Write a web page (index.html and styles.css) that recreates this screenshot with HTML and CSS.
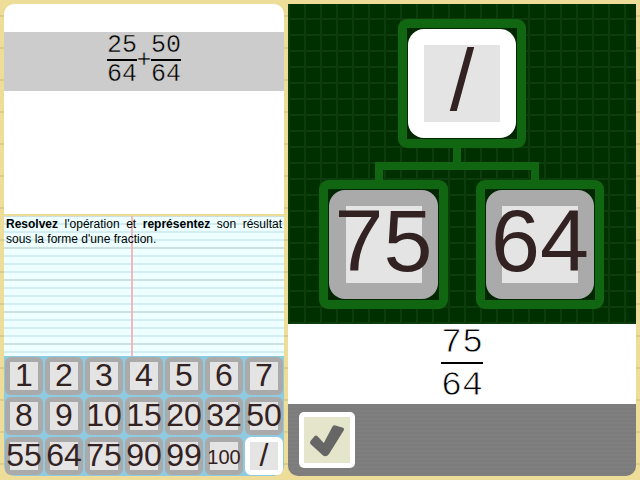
FILE: index.html
```
<!DOCTYPE html>
<html lang="fr">
<head>
<meta charset="utf-8">
<title>Fractions</title>
<link rel="stylesheet" href="styles.css">
</head>
<body>
<div class="app">
  <section class="left">
    <div class="problem">
      <div class="expression">
        <span class="fraction"><span class="num">25</span><span class="den">64</span></span><span class="plus">+</span><span class="fraction"><span class="num">50</span><span class="den">64</span></span>
      </div>
    </div>
    <div class="notes"><p><b>Resolvez</b> l'opération et <b>représentez</b> son résultat sous la forme d'une fraction.</p></div>
    <div class="keys">
      <div class="key">1</div><div class="key">2</div><div class="key">3</div><div class="key">4</div><div class="key">5</div><div class="key">6</div><div class="key">7</div>
      <div class="key">8</div><div class="key">9</div><div class="key">10</div><div class="key">15</div><div class="key">20</div><div class="key">32</div><div class="key">50</div>
      <div class="key">55</div><div class="key">64</div><div class="key">75</div><div class="key">90</div><div class="key">99</div><div class="key small">100</div><div class="key op">/</div>
    </div>
  </section>
  <section class="right">
    <div class="board">
      <div class="slot"><div class="tile white">/</div></div>
      <div class="stem"></div>
      <div class="branch"></div>
      <div class="children">
        <div class="slot wide"><div class="tile">75</div></div>
        <div class="slot"><div class="tile">64</div></div>
      </div>
    </div>
    <div class="answer"><span class="fraction large"><span class="num">75</span><span class="den">64</span></span></div>
    <div class="toolbar">
      <button class="check" aria-label="Valider">
        <svg width="56" height="56" viewBox="0 0 56 56"><path d="M11.500 29L15.500 24.200Q17 22.700 18.500 24.200L24.800 31L33.500 14.500Q34.500 13 36.500 13.400L44 15.700Q45.800 16.500 44.800 18.200L30 42Q27 45.800 23.500 43L11.500 32Q10.500 30.500 11.500 29Z" fill="#666"/></svg>
      </button>
    </div>
  </section>
</div>
</body>
</html>
```
FILE: styles.css
```
* { box-sizing: border-box; }
body {
  margin: 0;
  width: 640px;
  height: 480px;
  overflow: hidden;
  font-family: "Liberation Sans", Arial, sans-serif;
  background: repeating-linear-gradient(#eedd99 0 15px, #dccb8b 15px 17px, #eedd99 17px 32px);
}
.app {
  display: grid;
  grid-template-columns: 280px 348px;
  gap: 4px;
  height: 480px;
  padding: 4px;
}
.left { display: flex; flex-direction: column; height: 472px; }
.problem {
  height: 210px;
  padding-top: 28px;
  background: #fff;
  border-radius: 10px 10px 0 0;
}
.expression {
  display: flex;
  justify-content: center;
  height: 59px;
  background: #ccc;
  color: #000;
  font: 25px/30px "Liberation Mono", monospace;
  -webkit-text-stroke: .45px #ccc;
}
.fraction {
  display: flex;
  flex-direction: column;
  width: 30px;
  text-align: center;
}
.num { height: 29px; line-height: 27px; border-bottom: 2px solid #000; }
.den { height: 29px; line-height: 28px; }
.plus { width: 14px; line-height: 57px; text-align: center; text-indent: -.5px; }
.notes {
  height: 140px;
  margin-top: 2px;
  padding: 1px 2px 0;
  background:
    linear-gradient(90deg, transparent 127px, #f4b8bc 127px 129px, transparent 129px),
    linear-gradient(#cde0e0 2px, transparent 2px) 0 -1px / 100% 32px,
    linear-gradient(#d2eef2 2px, transparent 2px) 0 -1px / 100% 8px,
    #eff;
}
.notes p { margin: 0; font-size: 12px; line-height: 15px; text-align: justify; }
.keys {
  display: grid;
  grid-template-columns: repeat(7, 40px);
  grid-template-rows: repeat(3, 40px);
  height: 120px;
  background: #8fcbe0;
  border-radius: 0 0 10px 10px;
}
.key {
  display: flex;
  align-items: center;
  justify-content: center;
  width: 38.6px;
  height: 38.6px;
  margin: .7px;
  padding-bottom: 2px;
  border-radius: 6px;
  background: linear-gradient(#e4e4e4, #e4e4e4) center / 28px 28px no-repeat, #aaa;
  color: #322;
  font-size: 32px;
  line-height: 38px;
}
.key.small { padding: 2px 0 0; font-size: 20px; }
.key.op { background-color: #fff; }
.right { display: flex; flex-direction: column; height: 472px; }
.board {
  display: flex;
  flex-direction: column;
  align-items: center;
  height: 320px;
  padding-top: 15px;
  background:
    repeating-linear-gradient(transparent 0 14px, #0d3d0d 14px 16px),
    repeating-linear-gradient(90deg, #0d3d0d 0 2px, transparent 2px 16px),
    #003000;
}
.slot {
  width: 128px;
  height: 129px;
  padding: 1px;
  border: 9px solid #116611;
  border-radius: 9px;
  background: #002800;
}
.slot.wide { width: 129px; margin-left: -1px; }
.tile {
  display: flex;
  align-items: center;
  justify-content: center;
  height: 109px;
  padding-bottom: 8px;
  border-radius: 16px;
  background: linear-gradient(#e4e4e4, #e4e4e4) center / 76px 77px no-repeat, #aaa;
  color: #322;
  font-size: 88px;
  line-height: 100px;
}
.tile.white { background-color: #fff; }
.stem { width: 8px; height: 14px; margin-right: 10px; background: #116611; }
.branch { width: 164px; height: 18px; margin-right: 10px; border: 8px solid #116611; border-bottom: 0; }
.children { display: flex; gap: 28px; }
.answer {
  display: flex;
  justify-content: center;
  height: 80px;
  background: #fff;
}
.fraction.large { width: 42px; font: 35px/40px "Liberation Mono", monospace; -webkit-text-stroke: .8px #fff; }
.large .num { height: 40px; line-height: 39px; }
.large .den { height: 40px; line-height: 44px; }
.toolbar {
  height: 72px;
  padding: 8px 11px;
  border-radius: 0 0 10px 10px;
  background: repeating-linear-gradient(#7c7c7c 0 2px, #7f7f7f 2px 4px);
}
.check {
  display: block;
  width: 56px;
  height: 56px;
  padding: 0;
  border: 0;
  border-radius: 5px;
  background: linear-gradient(#e5e5cc, #e5e5cc) center / 46px 46px no-repeat, #fff;
}
.check svg { display: block; }
```
